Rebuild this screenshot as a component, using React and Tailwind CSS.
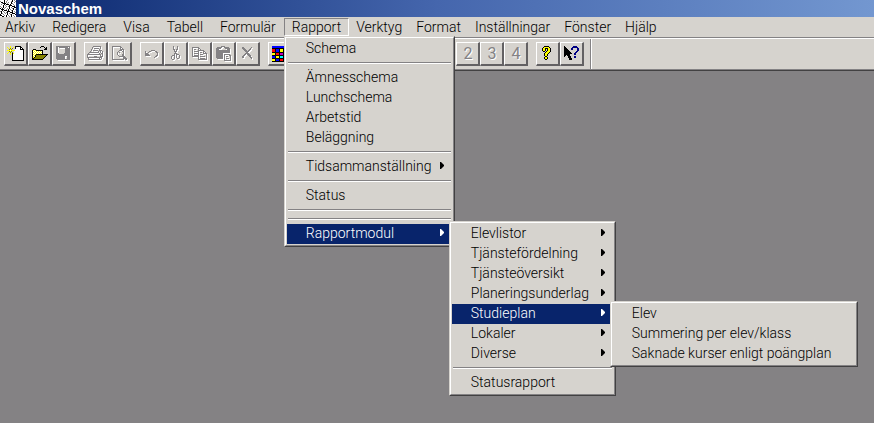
import { Fragment } from "react";

const COLORS = {
  K: "#000000",
  W: "#ffffff",
  G: "#848284",
  Y: "#ffff00",
  O: "#848200",
  N: "#000084",
  B: "#0000ff",
  R: "#ff0000",
  C: "#00ffff",
  M: "#c000c0",
};

const ICONS = {
  logo: [
    "WWWWKWWGWWWWKWGW",
    "GWWWKWGWWWWGKWWG",
    "WKKWKWGWGWWKWWGW",
    "WWGKKKWGWWWKGWWW",
    "WGWWKWKKKWKWWGWW",
    "WWWKWGWWWKKKWWGW",
    "GWWKWWGWGKWWKKKW",
    "WGWKWGWWWKWGWWKK",
    "KWKWGWWGWKWWGKWW",
    "WKKKWWGWKWGWWKWG",
    "WWKWKKKWKWWGKWWW",
    "GKWGWWWKKKWWKWGW",
    "WKWWGWGKWWKKKWWG",
    "WKGWWGWKWGWWKKKW",
    "KWWGWWWKWWGKWWWK",
    "KKWWGWKWGWWKWGWW",
    "WWKKWWKWWGWKWWGW",
  ],
  new: [
    "...Y....KKKKKK....",
    "Y..Y..Y.KWWWWKK...",
    ".Y.O.O..KWWWWKWK..",
    "..OYO...WWWWWKKKK.",
    "YYYWYYYYWWWWWWWWK.",
    "..OYO..WWWWWWWWWK.",
    ".Y.O.O.WWWWWWWWWK.",
    "Y..Y.KYWWWWWWWWWK.",
    "...Y.KWWWWWWWWWWK.",
    ".....KWWWWWWWWWWK.",
    ".....KWWWWWWWWWWK.",
    ".....KWWWWWWWWWWK.",
    ".....KWWWWWWWWWWK.",
    ".....KWWWWWWWWWWK.",
    ".....KKKKKKKKKKKK.",
  ],
  open: [
    "..........KKK.....",
    ".........K...K.K..",
    "..............KK..",
    "..KKK........KKK..",
    ".KYWYKKKKKKK......",
    ".KWYWYWYWYWK......",
    ".KYWYWYWYWYK......",
    ".KWYWYWYWYWK......",
    ".KYWYKKKKKKKKKKKK.",
    ".KWYKOOOOOOOOOOK..",
    ".KYWKOOOOOOOOOK...",
    ".KYKOOOOOOOOOK....",
    ".KKOOOOOOOOOK.....",
    ".KKKKKKKKKKK......",
  ],
  save: [
    ".GGGGGGGGGGGGGG...",
    ".GG.GGGGGGGGG.G...",
    ".GG.......GGGGG...",
    ".GG.......GGGGG...",
    ".GG.......GGGGG...",
    ".GG.......GGGGG...",
    ".GG.......GGGGG...",
    ".GGG.....GGGGGG...",
    ".GGGGGGGGGGGGGG...",
    ".GGGGGGGGGGGGGG...",
    ".GGGGGGGGG..GGG...",
    ".GGGGGGGGG..GGG...",
    ".GGGGGGGGG..GGG...",
    "..GGGGGGGGGGGGG...",
  ],
  print: [
    "......GGGGGGGG....",
    ".....G.......G....",
    ".....G.GGGGG.G....",
    "....G.......G.....",
    "....G.GGGGG.GGG...",
    "...G.......G.G.G..",
    "..GGGGGGGGGG.G.G..",
    ".G..........G.GG..",
    "GGGGGGGGGGGGGG.G..",
    "G............G.G..",
    "G......GGG...GGG..",
    "GGGGGGGGGGGGGGG...",
    ".G..........G.G...",
    ".GGGGGGGGGGGGG....",
  ],
  preview: [
    ".GGGGGGGGG........",
    ".G.......GG.......",
    ".G.......G.G......",
    ".G.......GGGG.....",
    ".G......GGG.G.....",
    ".G.....G...GG.....",
    ".G....G.G...G.....",
    ".G....G.....G.....",
    ".G....G....GG.....",
    ".G.....G...GG.....",
    ".G......GGGGGG....",
    ".G..........GGG...",
    ".G..........GGGG..",
    ".GGGGGGGGGGGG.GG..",
  ],
  undo: [
    "..................",
    "..................",
    "..................",
    "..................",
    "........GGGG......",
    "..G...GG....GG....",
    "..G..G.......GG...",
    "..GGG.........G...",
    "..GGGG........G...",
    "..GGGGG......GG...",
    "............GG....",
    "...........G......",
  ],
  cut: [
    "......G...G.......",
    "......G...G.......",
    "......G...G.......",
    "......GG.GG.......",
    ".......G.G........",
    ".......GGG........",
    "........G.........",
    ".......GGG........",
    ".......G.GGG......",
    ".....GGG.G..G.....",
    "....G..G.G..G.....",
    "....G..G.G..G.....",
    "....G..G..GG......",
    ".....GG...........",
  ],
  copy: [
    "..................",
    ".GGGGGGG..........",
    ".G.....GG.........",
    ".G.GG..G.G........",
    ".G.....GGGGGG.....",
    ".G.GGGGG....GG....",
    ".G.....G.GG.G.G...",
    ".G.GGGGG....GGGG..",
    ".G.....G.GGG...G..",
    ".G.GGGGG.......G..",
    ".GGGGGGG.GGGGG.G..",
    ".......G.......G..",
    ".......G.GGGGG.G..",
    ".......GGGGGGGGG..",
  ],
  paste: [
    "......GGGG........",
    "..GGGGG..GGGGG....",
    ".GGGGG....GGGGG...",
    ".GGG........GGG...",
    ".GGGGGGGGGGGGGG...",
    ".GGGGGGGGGGGGGG...",
    ".GGGGGGGGGGGGGG...",
    ".GGGGGGG..........",
    ".GGGGGGG.GGGGGG...",
    ".GGGGGGG.G....GG..",
    ".GGGGGGG.G.GG..G..",
    ".GGGGGGG.G.....G..",
    "..GGGGGG.G.GGG.G..",
    ".........G.....G..",
    ".........GGGGGGG..",
  ],
  delete: [
    "..................",
    "...GG.......G.....",
    "...GGG.....G......",
    "....GGG...GG......",
    ".....GGG.GG.......",
    "......GGGG........",
    ".......GG.........",
    "......GGGG........",
    ".....GG.GGG.......",
    "....GG...GGG......",
    "...GG.....GG......",
    "...GG......GG.....",
    "............G.....",
  ],
  schema: [
    ".BBBBBBBBBBBBBBBBB",
    ".BBBBBBBBBBBBBBBBB",
    ".KKKKKKKKKKKKKKKKK",
    ".RRRKBBBKYYYKBBBKR",
    ".RRRKBBBKYYYKBBBKR",
    ".RRRKBBBKYYYKBBBKR",
    ".KKKKKKKKKKKKKKKKK",
    ".YYYKRRRKMMMKCCCKY",
    ".YYYKRRRKMMMKCCCKY",
    ".KKKKKKKKKKKKKKKKK",
    ".BBBKYYYKCCCKYYYKB",
    ".BBBKYYYKCCCKYYYKB",
    ".KKKKKKKKKKKKKKKKK",
    ".YYYKBBBKRRRKBBBKR",
    ".YYYKBBBKRRRKBBBKR",
    ".KKKKKKKKKKKKKKKKK",
  ],
  help: [
    ".....KKKKK........",
    "....KYYYYYK.......",
    "...KYYKKKYYK......",
    "...KYYK.KYYK......",
    "...KYYK.KYYK......",
    "....KK.KYYYK......",
    "......KYYYK.......",
    ".....KYYYK........",
    ".....KYYK.........",
    ".....KYYK.........",
    "......KK..........",
    ".....KYYK.........",
    ".....KYYK.........",
    "......KK..........",
  ],
  context: [
    ".K........NNNN....",
    ".KK......NNNNNN...",
    ".KKK....NN....NN..",
    ".KKKK...NN....NN..",
    ".KKKKK........NN..",
    ".KKKKKK......NN...",
    ".KKKKKKK....NN....",
    ".KKKKKKKK..NN.....",
    ".KKKKKK....NN.....",
    ".KK.KKK...........",
    ".K...KKK...NN.....",
    ".....KKK...NN.....",
    "......KKK.........",
    "......KKK.........",
  ],
};

// turns rows of color letters into horizontal runs
function toRuns(rows) {
  const runs = [];
  rows.forEach((row, y) => {
    let x = 0;
    while (x < row.length) {
      let end = x + 1;
      while (row[end] === row[x]) end++;
      if (row[x] !== ".") runs.push({ x, y, width: end - x, color: COLORS[row[x]] });
      x = end;
    }
  });
  return runs;
}

function PixelIcon({ name, disabled, width = 18, height = 18 }) {
  const runs = toRuns(ICONS[name]);
  return (
    <svg width={width} height={height} shapeRendering="crispEdges" aria-hidden="true">
      {disabled &&
        runs.map((r, i) => (
          <rect key={i} x={r.x + 1} y={r.y + 1} width={r.width} height="1" fill="#fff" />
        ))}
      {runs.map((r, i) => (
        <rect key={i} x={r.x} y={r.y} width={r.width} height="1" fill={r.color} />
      ))}
    </svg>
  );
}

function ToolButton({ label, icon, text, disabled }) {
  return (
    <button
      type="button"
      aria-label={label}
      disabled={disabled}
      className="flex size-6 border-t border-l border-r-2 border-b-2 border-t-white border-l-white border-r-[#636163] border-b-[#636163] pt-[3px] pl-0.5"
    >
      {icon ? (
        <PixelIcon name={icon} disabled={disabled} />
      ) : (
        <span className="w-[18px] text-center text-base leading-4 font-normal text-[#848284] [text-shadow:1px_1px_0_#fff]">
          {text}
        </span>
      )}
    </button>
  );
}

const toolGroups = [
  [
    { label: "Ny", icon: "new" },
    { label: "Öppna", icon: "open" },
    { label: "Spara", icon: "save", disabled: true },
  ],
  [
    { label: "Skriv ut", icon: "print", disabled: true },
    { label: "Förhandsgranska", icon: "preview", disabled: true },
  ],
  [
    { label: "Ångra", icon: "undo", disabled: true },
    { label: "Klipp ut", icon: "cut", disabled: true },
    { label: "Kopiera", icon: "copy", disabled: true },
    { label: "Klistra in", icon: "paste", disabled: true },
    { label: "Ta bort", icon: "delete", disabled: true },
  ],
  [{ label: "Schema", icon: "schema" }],
];

const viewButtons = ["2", "3", "4"];

const leftMenus = ["Arkiv", "Redigera", "Visa", "Tabell", "Formulär"];
const rightMenus = ["Verktyg", "Format", "Inställningar", "Fönster", "Hjälp"];

const studieplanMenu = [
  [
    { label: "Elev" },
    { label: "Summering per elev/klass" },
    { label: "Saknade kurser enligt poängplan" },
  ],
];

const modulMenu = [
  [
    { label: "Elevlistor", arrow: true },
    { label: "Tjänstefördelning", arrow: true },
    { label: "Tjänsteöversikt", arrow: true },
    { label: "Planeringsunderlag", arrow: true },
    { label: "Studieplan", arrow: true, submenu: studieplanMenu, width: "w-[248px]" },
    { label: "Lokaler", arrow: true },
    { label: "Diverse", arrow: true },
  ],
  [{ label: "Statusrapport" }],
];

const rapportMenu = [
  [{ label: "Schema" }],
  [
    { label: "Ämnesschema" },
    { label: "Lunchschema" },
    { label: "Arbetstid" },
    { label: "Beläggning" },
  ],
  [{ label: "Tidsammanställning", arrow: true }],
  [{ label: "Status" }],
  [],
  [{ label: "Rapportmodul", arrow: true, submenu: modulMenu, width: "w-[167px]" }],
];

function MenuItem({ item }) {
  const open = Boolean(item.submenu);
  return (
    <li className="relative">
      <button
        type="button"
        className={`flex h-5 w-full items-center justify-between pr-[7px] pb-0.5 pl-[19px] whitespace-nowrap ${
          open ? "bg-[#08246b] text-white" : ""
        }`}
      >
        {item.label}
        {item.arrow && (
          <svg width="5" height="8" viewBox="0 0 5 8" fill="currentColor" aria-hidden="true">
            <path d="M0 0H1L4 3V4L1 7H0Z" />
          </svg>
        )}
      </button>
      {open && (
        <div className="absolute -top-[3px] left-full -ml-[3px]">
          <Menu groups={item.submenu} width={item.width} />
        </div>
      )}
    </li>
  );
}

function Menu({ groups, width }) {
  return (
    <div
      className={`${width} border border-t-[#d6d3ce] border-l-[#d6d3ce] border-r-[#424142] border-b-[#424142] text-black`}
    >
      <ul className="flex flex-col border border-t-white border-l-white border-r-[#848284] border-b-[#848284] bg-[#d6d3ce] p-px">
        {groups.map((group, i) => (
          <Fragment key={i}>
            {i > 0 && (
              <li className="mx-px mt-[3px] mb-1 h-0.5 border-t border-b border-t-[#848284] border-b-white" />
            )}
            {group.map((item) => (
              <MenuItem key={item.label} item={item} />
            ))}
          </Fragment>
        ))}
      </ul>
    </div>
  );
}

export default function App() {
  return (
    <div className="flex min-h-screen flex-col overflow-hidden bg-[#848284] font-[Roboto,'Liberation_Sans',sans-serif] text-sm leading-5 font-light text-black">
      <header className="flex h-[17px] items-center gap-0.5 bg-linear-to-r from-[#08246b] via-[#4566ad] to-[#7397d0]">
        <PixelIcon name="logo" width={16} height={17} />
        <h1 className="font-['Liberation_Sans',Arial,sans-serif] text-[15px] leading-4 font-bold text-white">
          Novaschem
        </h1>
      </header>

      <div className="bg-[#d6d3ce]">
        <nav className="relative z-10 -ml-[3px] flex h-5 items-start pt-px">
          <div className="flex gap-px">
            {leftMenus.map((name) => (
              <button key={name} type="button" className="h-[18px] px-2 leading-4">
                {name}
              </button>
            ))}
          </div>
          <div className="relative flex">
            <button
              type="button"
              className="h-[18px] border border-t-[#848284] border-l-[#848284] border-r-white border-b-white px-[7px] leading-4"
            >
              Rapport
            </button>
            <div className="absolute top-full left-0">
              <Menu groups={rapportMenu} width="w-[171px]" />
            </div>
          </div>
          <div className="flex">
            {rightMenus.map((name) => (
              <button key={name} type="button" className="h-[18px] px-[7px] leading-4">
                {name}
              </button>
            ))}
          </div>
        </nav>
      </div>

      <div className="flex h-[34px] border-t border-b border-t-[#848284] border-b-[#424142] bg-[#d6d3ce]">
        <div className="flex flex-1 border-t border-b border-t-white border-b-[#848284]">
          <div className="flex gap-2 border-r border-[#848284] pt-[3px] pr-1.5 pl-1">
            {toolGroups.map((group, i) => (
              <div key={i} className="flex">
                {group.map((tool) => (
                  <ToolButton key={tool.label} {...tool} />
                ))}
              </div>
            ))}
            <div className="ml-[156px] flex">
              {viewButtons.map((n) => (
                <ToolButton key={n} label={`Vy ${n}`} text={n} disabled />
              ))}
            </div>
            <div className="flex">
              <ToolButton label="Hjälp" icon="help" />
              <ToolButton label="Direkthjälp" icon="context" />
            </div>
          </div>
          <div className="flex-1 border-l border-white" />
        </div>
      </div>

      <main className="flex-1" />
    </div>
  );
}
